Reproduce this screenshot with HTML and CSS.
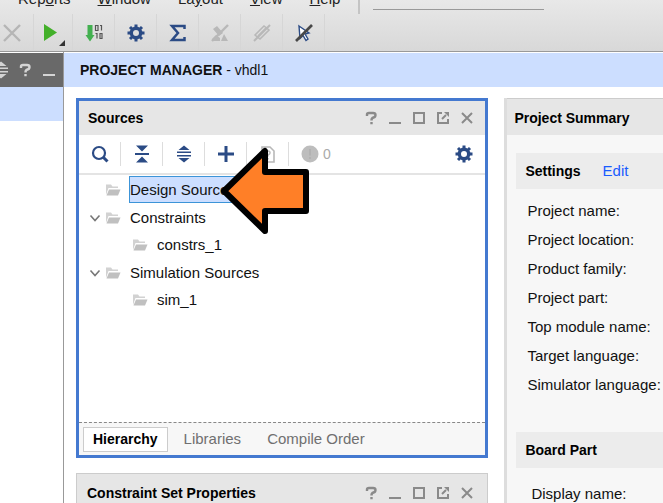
FILE: index.html
```html
<!DOCTYPE html>
<html lang="en">
<head>
<meta charset="utf-8">
<title>Project Manager - vhdl1</title>
<link rel="stylesheet" href="styles.css">
</head>
<body>
<svg class="symbols" aria-hidden="true">
  <symbol id="gear" viewBox="0 0 18 18"><circle cx="9" cy="9" r="4.7" fill="none" stroke="currentColor" stroke-width="3.4"/><path d="M9 .5v3M9 14.5v3M.5 9h3M14.5 9h3M3 3l2 2M13 13l2 2M15 3l-2 2M5 13l-2 2" stroke="currentColor" stroke-width="3"/></symbol>
  <symbol id="help" viewBox="0 0 18 18"><path d="M5 7V5.500Q5 4 7 4h4q2.500 0 2.500 2t-2 2.500Q9.500 9 9.500 11.500M9.500 13v2.200" fill="none" stroke="currentColor" stroke-width="2.400"/></symbol>
  <symbol id="minimize" viewBox="0 0 18 18"><path d="M3 14h12" stroke="currentColor" stroke-width="2"/></symbol>
  <symbol id="maximize" viewBox="0 0 18 18"><path d="M4 4h10v10H4z" fill="none" stroke="currentColor" stroke-width="2"/></symbol>
  <symbol id="float" viewBox="0 0 18 18"><path d="M8 4H4v10h10v-4" fill="none" stroke="currentColor" stroke-width="2"/><path d="M8 10l4-4" stroke="currentColor" stroke-width="2"/><path d="M10 3h5v5z" fill="currentColor"/></symbol>
  <symbol id="close" viewBox="0 0 18 18"><path d="M4 4l10 10M14 4L4 14" stroke="currentColor" stroke-width="2"/></symbol>
  <symbol id="expand" viewBox="0 0 18 18"><path d="M9 .5L14.500 5h-11zM9 17.500l5.500-4.500h-11z" fill="currentColor"/><path d="M2 7.300h14M2 10.700h14" stroke="currentColor" stroke-width="1.600"/></symbol>
  <symbol id="folder" viewBox="0 0 16 14"><path d="M1 12V1.500h5l1.500 2H13V5H3.500z" fill="#d2d2d2"/><path d="M4 6.500h11.500L13 12.500H1.500z" fill="#c0c0c0"/></symbol>
  <symbol id="chevron" viewBox="0 0 12 12"><path d="M1.500 3.500L6 8.500l4.500-5" fill="none" stroke="#777" stroke-width="1.600"/></symbol>
</svg>

<header class="app-bar">
  <div class="menu-row">
    <nav class="menus">
      <button class="menu">Rep<u>o</u>rts</button>
      <button class="menu"><u>W</u>indow</button>
      <button class="menu">La<u>y</u>out</button>
      <button class="menu"><u>V</u>iew</button>
      <button class="menu"><u>H</u>elp</button>
    </nav>
    <input class="quick-access" type="search" aria-label="Quick access">
  </div>
  <div class="toolbar">
    <button class="tool first" aria-label="Cancel"><svg width="18" height="18" viewBox="0 0 18 18"><path d="M1 1l16 16M17 1L1 17" stroke="#b5b5b5" stroke-width="2.400"/></svg></button>
    <button class="tool run" aria-label="Run"><svg width="26" height="26" viewBox="0 0 26 26"><path d="M4 3l13 8.500L4 20z" fill="#43b02a"/><path d="M25 19v6h-6z" fill="#333"/></svg></button>
    <button class="tool" aria-label="Generate bitstream"><svg width="18" height="18" viewBox="0 0 18 18"><path d="M2.500 1h5v10h2L5 17.500.500 11h2z" fill="#43b050"/><path d="M10.500 1.500h2.500v5h-2.500zM15 1.500h1.500v5M10.500 9.500H12v5M15 9.500h2v5h-2z" fill="none" stroke="#555" stroke-width="1.200"/></svg></button>
    <button class="tool" aria-label="Settings"><svg width="18" height="18"><use href="#gear"/></svg></button>
    <button class="tool" aria-label="Reports"><svg width="18" height="18" viewBox="0 0 18 18"><path d="M15.500 5V2H3l6 7-6 7h12.500v-3" fill="none" stroke="currentColor" stroke-width="2.500"/></svg></button>
    <button class="tool off" aria-label="Clear highlight"><svg width="18" height="18" viewBox="0 0 18 18"><path d="M2 5l4-3 6 7-4 3zM1 17v-2l4-4 4 3v3zM10 17l3-7 4 7z" fill="currentColor"/><path d="M1 17L17 1" stroke="currentColor" stroke-width="2.400"/></svg></button>
    <button class="tool off" aria-label="Clear marks"><svg width="18" height="18" viewBox="0 0 18 18"><path d="M2 11l9-9 5 4-9 9zM5 12l8-8" fill="none" stroke="currentColor" stroke-width="1.600"/><path d="M1 17L17 1" stroke="currentColor" stroke-width="2"/></svg></button>
    <button class="tool" aria-label="Unselect"><svg width="18" height="18" viewBox="0 0 18 18"><path d="M4 2l10 7-4 1 3 5-2 1.500-3-5-3 3z" fill="#fff" stroke="currentColor" stroke-width="1.400"/><path d="M1 17L17 1" stroke="#484848" stroke-width="2.600"/></svg></button>
  </div>
</header>

<div class="workspace">
  <aside class="navigator">
    <div class="navigator-title">
      <button class="icon" aria-label="Expand all"><svg width="18" height="18"><use href="#expand"/></svg></button>
      <button class="icon" aria-label="Help"><svg width="18" height="18"><use href="#help"/></svg></button>
      <button class="icon" aria-label="Minimize"><svg width="18" height="18"><use href="#minimize"/></svg></button>
    </div>
    <div class="navigator-current"></div>
  </aside>

  <main class="manager">
    <h1 class="manager-title"><strong>PROJECT MANAGER</strong> - vhdl1</h1>
    <div class="panes">
      <div class="left-panes">
        <section class="pane active">
          <div class="pane-title">
            <h2>Sources</h2>
            <button class="icon" aria-label="Help"><svg width="18" height="18"><use href="#help"/></svg></button>
            <button class="icon" aria-label="Minimize"><svg width="18" height="18"><use href="#minimize"/></svg></button>
            <button class="icon" aria-label="Maximize"><svg width="18" height="18"><use href="#maximize"/></svg></button>
            <button class="icon" aria-label="Float"><svg width="18" height="18"><use href="#float"/></svg></button>
            <button class="icon" aria-label="Close"><svg width="18" height="18"><use href="#close"/></svg></button>
          </div>
          <div class="pane-tools">
            <button class="pane-tool" aria-label="Search"><svg width="18" height="18" viewBox="0 0 18 18"><circle cx="8" cy="8" r="6" fill="none" stroke="currentColor" stroke-width="2.200"/><path d="M12 12l4.500 4.500" stroke="currentColor" stroke-width="3"/></svg></button>
            <button class="pane-tool" aria-label="Collapse all"><svg width="18" height="18" viewBox="0 0 18 18"><path d="M3 .500h12L9 6.500zM3 17.500h12l-6-6z" fill="currentColor"/><path d="M2 9h14" stroke="currentColor" stroke-width="2"/></svg></button>
            <button class="pane-tool" aria-label="Expand all"><svg width="18" height="18"><use href="#expand"/></svg></button>
            <button class="pane-tool" aria-label="Add sources"><svg width="18" height="18" viewBox="0 0 18 18"><path d="M9 1v16M1 9h16" stroke="currentColor" stroke-width="3"/></svg></button>
            <button class="pane-tool off" aria-label="Source file properties"><svg width="18" height="18" viewBox="0 0 18 18"><path d="M3 2h8l4 4v11H3z" fill="none" stroke="currentColor" stroke-width="1.600"/><path d="M7 8q0-2 2-2t2 2q0 1-2 2v1.500M9 13v1.500" fill="none" stroke="currentColor" stroke-width="1.500"/></svg></button>
            <span class="messages"><svg width="18" height="18" viewBox="0 0 18 18"><circle cx="9" cy="9" r="8.500" fill="#bdbdbd"/><path d="M9 4v6.500M9 12v2" stroke="#b0b0b0" stroke-width="1.600"/></svg>0</span>
            <button class="pane-settings" aria-label="Settings"><svg width="18" height="18"><use href="#gear"/></svg></button>
          </div>
          <ul class="tree">
            <li><div class="node"><span class="toggle"></span><svg width="16" height="14"><use href="#folder"/></svg><span class="label selected">Design Sources</span></div></li>
            <li>
              <div class="node"><svg class="toggle" width="12" height="12"><use href="#chevron"/></svg><svg width="16" height="14"><use href="#folder"/></svg><span class="label">Constraints</span></div>
              <ul><li><div class="node"><svg width="16" height="14"><use href="#folder"/></svg><span class="label">constrs_1</span></div></li></ul>
            </li>
            <li>
              <div class="node"><svg class="toggle" width="12" height="12"><use href="#chevron"/></svg><svg width="16" height="14"><use href="#folder"/></svg><span class="label">Simulation Sources</span></div>
              <ul><li><div class="node"><svg width="16" height="14"><use href="#folder"/></svg><span class="label">sim_1</span></div></li></ul>
            </li>
          </ul>
          <div class="tabs">
            <button class="tab current">Hierarchy</button>
            <button class="tab">Libraries</button>
            <button class="tab">Compile Order</button>
          </div>
          <svg class="pointer" width="92" height="90" viewBox="0 0 92 90" aria-hidden="true"><path d="M5 45L46 5v21h41v39H46v20z" fill="#ff7f27" stroke="#000" stroke-width="6" stroke-linejoin="round"/></svg>
        </section>
        <section class="pane">
          <div class="pane-title">
            <h2>Constraint Set Properties</h2>
            <button class="icon" aria-label="Help"><svg width="18" height="18"><use href="#help"/></svg></button>
            <button class="icon" aria-label="Minimize"><svg width="18" height="18"><use href="#minimize"/></svg></button>
            <button class="icon" aria-label="Maximize"><svg width="18" height="18"><use href="#maximize"/></svg></button>
            <button class="icon" aria-label="Float"><svg width="18" height="18"><use href="#float"/></svg></button>
            <button class="icon" aria-label="Close"><svg width="18" height="18"><use href="#close"/></svg></button>
          </div>
        </section>
      </div>

      <section class="summary">
        <h2 class="summary-title">Project Summary</h2>
        <div class="card">
          <h3 class="card-title">Settings <a href="#settings">Edit</a></h3>
          <ul class="fields" id="settings">
            <li>Project name:</li>
            <li>Project location:</li>
            <li>Product family:</li>
            <li>Project part:</li>
            <li>Top module name:</li>
            <li>Target language:</li>
            <li>Simulator language:</li>
          </ul>
        </div>
        <div class="card">
          <h3 class="card-title">Board Part</h3>
          <ul class="fields board">
            <li>Display name:</li>
          </ul>
        </div>
      </section>
    </div>
  </main>
</div>
</body>
</html>
```

FILE: styles.css
```css
* { box-sizing: border-box; }

body {
  margin: 0;
  height: 100vh;
  display: flex;
  flex-direction: column;
  overflow: hidden;
  background: #fff;
  color: #111;
  font: 15px/20px "Liberation Sans", Arial, sans-serif;
}

h1, h2, h3, ul { margin: 0; padding: 0; }
h2, h3 { font-size: 14px; color: #000; }
ul { list-style: none; }
svg { display: block; flex: none; }
.symbols { position: absolute; width: 0; height: 0; }

button {
  display: flex;
  align-items: center;
  justify-content: center;
  flex: none;
  margin: 0;
  padding: 0;
  border: 0;
  background: none;
  color: #2b4b85;
  font: inherit;
}

/* Application bar */
.app-bar {
  flex: none;
  background: linear-gradient(#e8e8e8, #d8d8d8);
  border-bottom: 1px solid #999;
}

.menu-row {
  display: flex;
  align-items: flex-end;
  height: 14px;
  padding-left: 18px;
}

.menus {
  display: flex;
  gap: 27px;
  padding: 0 18px 5px 0;
  border-right: 2px solid #c4c4c4;
}
.menu { color: #222; }

.quick-access {
  width: 171px;
  height: 20px;
  margin: 0 0 4px 13px;
  padding: 0;
  border: 0;
  border-bottom: 1px solid #999;
  background: none;
}

.toolbar { display: flex; padding-bottom: 1px; }
.tool {
  width: 42px;
  height: 36px;
  padding-top: 2px;
  border-right: 1px solid #d6d6d6;
}
.tool.first { width: 34px; padding-right: 9px; }
.tool.run { width: 39px; padding-top: 4px; }
.off { color: #b8b8b8; }

/* Workspace */
.workspace { display: flex; flex: 1; min-height: 0; }

.navigator {
  flex: none;
  width: 64px;
  border-right: 1px solid #999;
  padding-top: 1px;
}
.navigator-title {
  display: flex;
  align-items: center;
  justify-content: flex-end;
  height: 34px;
  padding-right: 2px;
  overflow: hidden;
  background: #696969;
}
.navigator-title .icon { color: #d4d4d4; }
.navigator-current { height: 34px; background: #ccdeff; }

.icon { width: 24px; height: 24px; color: #8a8a8a; }

.manager {
  display: flex;
  flex-direction: column;
  flex: 1;
  min-width: 0;
  padding-top: 1px;
}
.manager-title {
  flex: none;
  padding: 7px 16px;
  background: #ccdeff;
  color: #111;
  font-size: 14px;
  font-weight: 400;
}

.panes {
  display: grid;
  grid-template-columns: 13fr 5fr;
  gap: 16px;
  flex: 1;
  min-height: 0;
  padding: 11px 0 0 12px;
}
.left-panes {
  display: flex;
  flex-direction: column;
  gap: 15px;
  min-width: 0;
}

.pane { border: 1px solid #ccc; border-bottom: 0; }
.pane .pane-title { height: 29px; padding: 8px 8px 0 10px; }
.pane-title {
  display: flex;
  align-items: center;
  background: #e6e6e6;
}
.pane-title h2 { flex: 1; white-space: nowrap; }

.pane.active {
  position: relative;
  display: flex;
  flex-direction: column;
  flex: 1;
  border: 3px solid #4479d0;
}
.pane.active .pane-title { height: 34px; padding: 0 6px 0 9px; }

.pane-tools {
  display: flex;
  align-items: center;
  height: 40px;
  border-bottom: 2px solid #e4e4e4;
}
.pane-tool {
  width: 42px;
  height: 24px;
  border-right: 1px solid #ddd;
}
.messages {
  display: flex;
  align-items: center;
  gap: 4px;
  flex: 1;
  padding-left: 12px;
  color: #aaa;
  font-size: 14px;
}
.pane-settings { width: 24px; margin-right: 9px; }

.tree { flex: 1; padding: 1px 0 0 10px; }
.tree > li { margin-bottom: 1px; }
.tree ul { padding-left: 43px; }
.node { display: flex; align-items: center; height: 27px; }
.toggle { width: 12px; margin-right: 4px; }
.label {
  margin-left: 8px;
  padding-right: 4px;
  line-height: 25px;
  border: 1px solid transparent;
}
.selected { background: #ccdeff; border-color: #3c94d8; }

.tabs {
  display: flex;
  align-items: center;
  height: 33px;
  padding-left: 4px;
  border-top: 1px dashed #888;
  background: #f7f7f7;
}
.tab {
  height: 25px;
  padding: 0 13px;
  color: #707070;
}
.tab.current {
  margin-right: 3px;
  padding: 0 9px;
  border: 1px solid #ccc;
  background: #fff;
  color: #000;
  font-size: 14px;
  font-weight: 700;
}

.pointer { position: absolute; left: 140px; top: 45px; }

/* Project summary */
.summary {
  min-width: 0;
  overflow: hidden;
  white-space: nowrap;
  border-left: 3px solid #ddd;
  background: #f7f7f7;
}
.summary-title {
  height: 37px;
  padding: 9px 7px;
  border-top: 1px solid #ccc;
  background: #e6e6e6;
}
.card { padding: 18px 0 0 9px; }
.card-title {
  display: flex;
  gap: 22px;
  padding: 8px 9px;
  background: #ececec;
}
.card-title a {
  color: #1a5cff;
  font-size: 15px;
  font-weight: 400;
  text-decoration: none;
}
.fields { padding: 7px 0 15px 11px; line-height: 29px; }
.fields.board { padding: 11px 0 0 15px; }
```
